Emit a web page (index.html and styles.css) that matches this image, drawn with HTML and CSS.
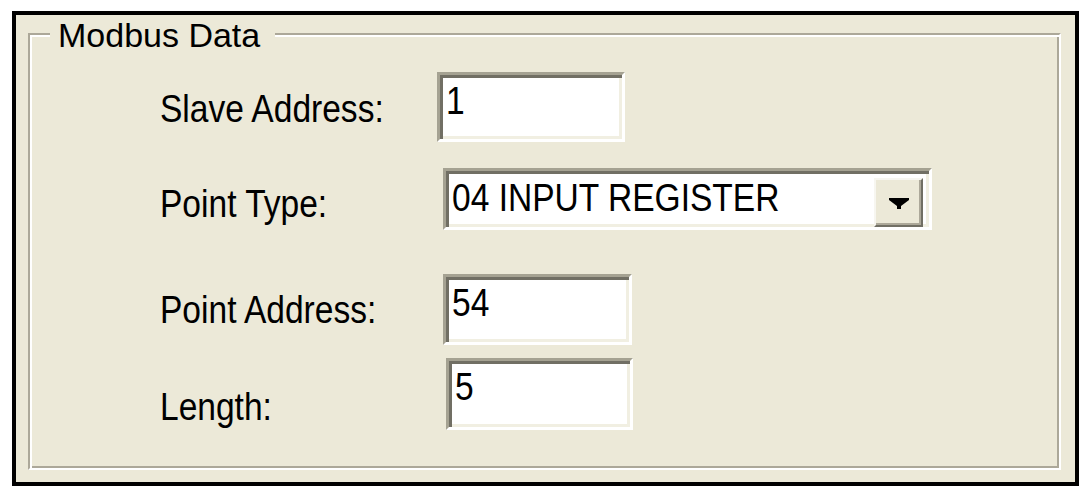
FILE: index.html
```html
<!DOCTYPE html>
<html>
<head>
<meta charset="utf-8">
<link rel="stylesheet" href="styles.css">
</head>
<body>
<div class="frame">
  <div class="group">
    <div class="group-title">Modbus Data</div>
    <div class="row row-slave">
      <div class="label"><span class="txt">Slave Address:</span></div>
      <div class="field field-slave"><span class="txt">1</span></div>
    </div>
    <div class="row row-type">
      <div class="label"><span class="txt">Point Type:</span></div>
      <div class="field combo">
        <span class="txt combo-text">04 INPUT REGISTER</span>
        <span class="combo-btn">
          <svg width="20" height="11" viewBox="0 0 20 11"><polygon points="0,0 20,0 20,2 12,8 12,11 8,11 8,8 0,2" fill="#000"/></svg>
        </span>
      </div>
    </div>
    <div class="row row-addr">
      <div class="label"><span class="txt">Point Address:</span></div>
      <div class="field field-addr"><span class="txt">54</span></div>
    </div>
    <div class="row row-len">
      <div class="label"><span class="txt">Length:</span></div>
      <div class="field field-len"><span class="txt">5</span></div>
    </div>
  </div>
</div>
</body>
</html>
```
FILE: styles.css
```css
html, body {
  margin: 0;
  padding: 0;
  background: #ffffff;
}

.frame {
  margin: 11px 8px 0 12px;
  border: 4px solid #000;
  background: #ECE9D8;
  padding: 18px 14px 12px 12px;
}

.group {
  position: relative;
  border: 2px solid;
  border-color: #ACA899 #ffffff #ffffff #ACA899;
  box-shadow: inset 2px 2px 0 #ffffff, inset -2px -2px 0 #ACA899;
  padding: 37px 0 38px 130px;
}

.group-title {
  position: absolute;
  left: 20px;
  top: -17px;
  padding: 0 15px 0 8px;
  background: #ECE9D8;
  font-family: "Liberation Sans", Arial, sans-serif;
  font-size: 34px;
  line-height: 34px;
  color: #000;
}

.row {
  display: flex;
  align-items: flex-start;
}

.row-type { margin-top: 26px; }
.row-addr { margin-top: 44px; }
.row-len { margin-top: 13px; }

.label,
.field {
  font-family: "Liberation Sans", Arial, sans-serif;
  font-size: 39px;
  line-height: 39px;
  color: #000;
}

.txt {
  display: inline-block;
  white-space: nowrap;
  transform: scaleX(0.86);
  transform-origin: 0 0;
}

.label {
  width: 277px;
  flex: none;
}

.row-slave .label { margin-top: 17px; }
.row-type .label { margin-top: 16px; }
.row-addr .label { margin-top: 16px; }
.row-len .label { margin-top: 29px; }

.field {
  box-sizing: border-box;
  background: #fff;
  border: 3px solid;
  border-color: #A5A292 #ffffff #ffffff #A5A292;
  box-shadow: inset 3px 3px 0 #716F64, inset -3px -3px 0 #F1EFE2;
  padding: 6px 4px 0 6px;
}

.field-slave { width: 188px; height: 70px; }
.field-addr { width: 189px; height: 71px; margin-left: 6px; }
.field-len { width: 187px; height: 72px; margin-left: 9px; }

.combo {
  width: 489px;
  height: 62px;
  margin-left: 6px;
  display: flex;
  justify-content: space-between;
  align-items: flex-start;
  padding: 7px 9px 0 6px;
}

.combo-btn {
  box-sizing: border-box;
  width: 49px;
  height: 49px;
  margin-top: 0;
  margin-right: -3px;
  background: #ECE9D8;
  border: 2px solid;
  border-color: #F7F6F0 #716F64 #716F64 #F7F6F0;
  box-shadow: inset -2px -2px 0 #ACA899;
  display: flex;
  align-items: center;
  justify-content: center;
  padding-top: 2px;
}

.combo-btn svg {
  display: block;
}
```
